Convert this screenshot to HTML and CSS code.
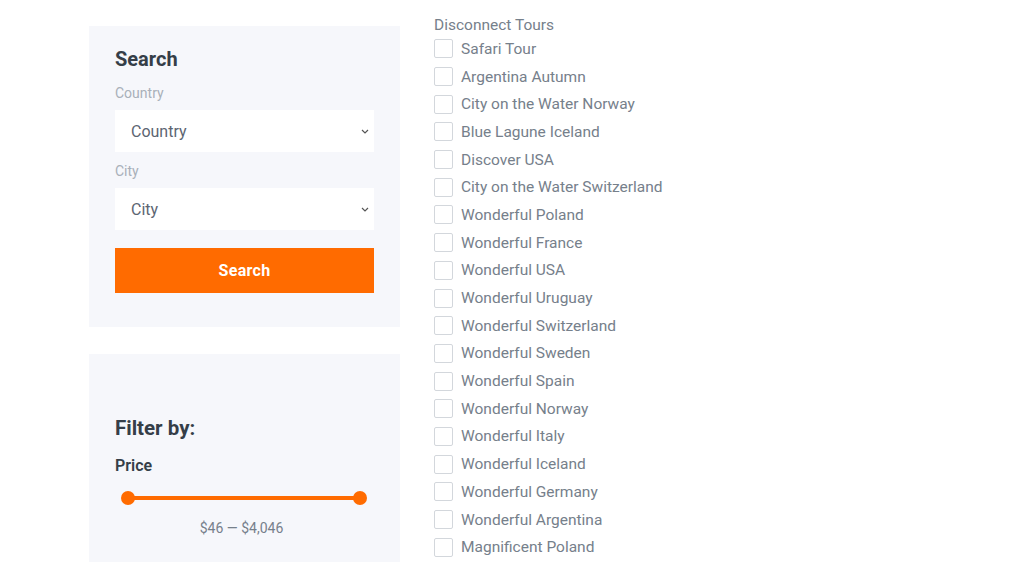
FILE: index.html
```html
<!DOCTYPE html>
<html lang="en">
<head>
  <meta charset="UTF-8">
  <title>Tours</title>
  <meta name="viewport" content="width=device-width,initial-scale=1"/>
  <link rel="stylesheet" href="styles.css">
</head>
<body>
<div class="page">
  <aside class="sidebar">
    <div class="widget search-widget">
      <h3 class="widget-title">Search</h3>
      <label class="field-label">Country</label>
      <div class="select-wrap">
        <select class="select">
          <option>Country</option>
        </select>
      </div>
      <label class="field-label">City</label>
      <div class="select-wrap">
        <select class="select">
          <option>City</option>
        </select>
      </div>
      <button class="btn-search">Search</button>
    </div>

    <div class="widget filter-widget">
      <h3 class="widget-title">Filter by:</h3>
      <div class="filter-label">Price</div>
      <div class="range">
        <span class="range-bar"></span>
        <span class="range-handle left"></span>
        <span class="range-handle right"></span>
      </div>
      <div class="range-amount">$46 — $4,046</div>
    </div>
  </aside>

  <div class="tours">
    <div class="tours-title">Disconnect Tours</div>
    <label class="tour"><span class="box"></span>Safari Tour</label>
    <label class="tour"><span class="box"></span>Argentina Autumn</label>
    <label class="tour"><span class="box"></span>City on the Water Norway</label>
    <label class="tour"><span class="box"></span>Blue Lagune Iceland</label>
    <label class="tour"><span class="box"></span>Discover USA</label>
    <label class="tour"><span class="box"></span>City on the Water Switzerland</label>
    <label class="tour"><span class="box"></span>Wonderful Poland</label>
    <label class="tour"><span class="box"></span>Wonderful France</label>
    <label class="tour"><span class="box"></span>Wonderful USA</label>
    <label class="tour"><span class="box"></span>Wonderful Uruguay</label>
    <label class="tour"><span class="box"></span>Wonderful Switzerland</label>
    <label class="tour"><span class="box"></span>Wonderful Sweden</label>
    <label class="tour"><span class="box"></span>Wonderful Spain</label>
    <label class="tour"><span class="box"></span>Wonderful Norway</label>
    <label class="tour"><span class="box"></span>Wonderful Italy</label>
    <label class="tour"><span class="box"></span>Wonderful Iceland</label>
    <label class="tour"><span class="box"></span>Wonderful Germany</label>
    <label class="tour"><span class="box"></span>Wonderful Argentina</label>
    <label class="tour"><span class="box"></span>Magnificent Poland</label>
  </div>
</div>
</body>
</html>
```

FILE: styles.css
```css
:root {
  --color-heading: #353e48;
  --color-text: #76808b;
  --color-muted: #a9b0b9;
  --color-panel: #f6f7fb;
  --color-orange: #ff6b00;
}

* {
  box-sizing: border-box;
}

html,
body {
  margin: 0;
  padding: 0;
}

body {
  font-family: Roboto, "Liberation Sans", sans-serif;
  color: var(--color-text);
  background: #fff;
  height: 562px;
  overflow: hidden;
}

.page {
  display: flex;
  gap: 34px;
  padding-left: 89px;
}

/* sidebar */
.sidebar {
  width: 311px;
  padding-top: 26px;
  display: flex;
  flex-direction: column;
  gap: 27px;
}

.widget {
  background: var(--color-panel);
  padding: 21px 26px 34px;
}

.widget-title {
  margin: 0;
  font-size: 20px;
  line-height: 24px;
  font-weight: 700;
  color: var(--color-heading);
}

.field-label {
  display: block;
  margin: 13px 0 8px;
  font-size: 14px;
  line-height: 18px;
  color: var(--color-muted);
}

.search-widget .select-wrap + .field-label {
  margin-top: 10px;
}

.select {
  display: block;
  width: 100%;
  height: 42px;
  border: 0;
  border-radius: 0;
  background: #fff url("data:image/svg+xml,%3Csvg xmlns='http://www.w3.org/2000/svg' width='8' height='5' viewBox='0 0 8 5'%3E%3Cpath d='M1 1l3 3 3-3' fill='none' stroke='%23555' stroke-width='1.2'/%3E%3C/svg%3E") no-repeat right 5px center;
  -webkit-appearance: none;
  appearance: none;
  padding: 0 16px;
  font-family: inherit;
  font-size: 16px;
  color: #5c6572;
  outline: none;
}

.btn-search {
  display: block;
  width: 100%;
  height: 45px;
  margin-top: 18px;
  border: 0;
  background: var(--color-orange);
  color: #fff;
  font-family: inherit;
  font-size: 16px;
  font-weight: 700;
  letter-spacing: 0.3px;
  cursor: pointer;
}

.filter-widget {
  padding-top: 62px;
  padding-bottom: 40px;
}

.filter-widget .widget-title {
  font-size: 20.5px;
}

.filter-label {
  margin-top: 16px;
  font-size: 16px;
  line-height: 20px;
  font-weight: 600;
  color: var(--color-heading);
}

.range {
  position: relative;
  height: 14px;
  margin: 15px 0 0 6px;
  width: 246px;
}

.range-bar {
  position: absolute;
  left: 7px;
  right: 7px;
  top: 5px;
  height: 4px;
  background: var(--color-orange);
}

.range-handle {
  position: absolute;
  top: 0;
  width: 14px;
  height: 14px;
  border-radius: 50%;
  background: var(--color-orange);
}

.range-handle.left { left: 0; }
.range-handle.right { right: 0; }

.range-amount {
  margin-top: 14px;
  text-align: center;
  font-size: 14px;
  line-height: 18px;
  color: var(--color-text);
  padding-right: 6px;
}

/* tour list */
.tours {
  padding-top: 15px;
}

.tours-title {
  font-size: 15.5px;
  line-height: 20px;
  color: var(--color-text);
}

.tour {
  display: flex;
  align-items: center;
  height: 27.7px;
  font-size: 15.5px;
  color: var(--color-text);
  cursor: pointer;
}

.tour .box {
  width: 19px;
  height: 19px;
  border: 1px solid #d3d7dc;
  border-radius: 2px;
  background: #fff;
  margin-right: 8px;
  flex: none;
}
```
